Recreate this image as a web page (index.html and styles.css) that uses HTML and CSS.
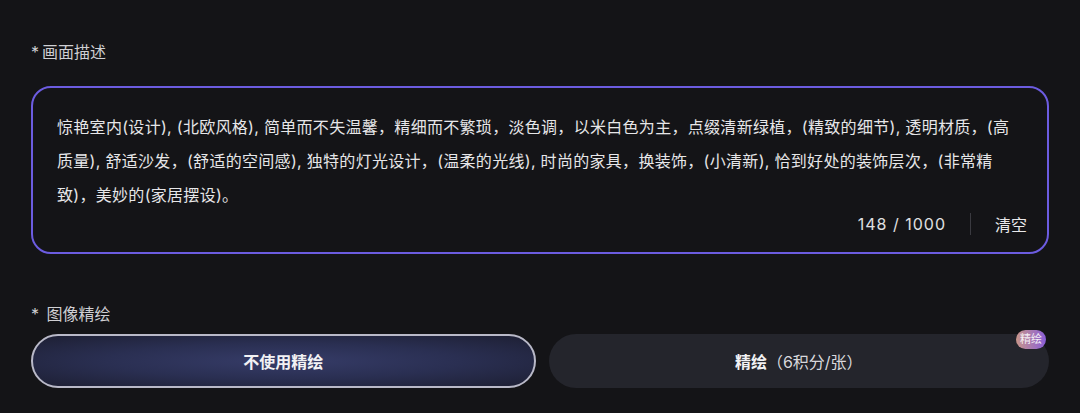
FILE: index.html
```html
<!DOCTYPE html>
<html lang="zh-CN">
<head>
    <meta charset="UTF-8">
    <meta name="viewport" content="width=device-width, initial-scale=1.0">
    <title>画面描述</title>
    <link rel="stylesheet" href="styles.css">
</head>
<body>
    <div class="panel">
        <!-- Prompt field -->
        <div class="field-label"><span class="star">*</span>画面描述</div>
        <div class="prompt-box">
            <div class="prompt-text">惊艳室内(设计), (北欧风格), 简单而不失温馨，精细而不繁琐，淡色调，以米白色为主，点缀清新绿植，(精致的细节), 透明材质，(高质量), 舒适沙发，(舒适的空间感), 独特的灯光设计，(温柔的光线), 时尚的家具，换装饰，(小清新), 恰到好处的装饰层次，(非常精致)，美妙的(家居摆设)。</div>
            <div class="prompt-footer">
                <span class="counter">148 / 1000</span>
                <span class="divider"></span>
                <span class="clear">清空</span>
            </div>
        </div>

        <!-- Refine option -->
        <div class="field-label second"><span class="star">*</span> 图像精绘</div>
        <div class="options">
            <div class="option active">不使用精绘</div>
            <div class="option">精绘<span class="cost">（6积分/张）</span>
                <span class="badge">精绘</span>
            </div>
        </div>
    </div>
</body>
</html>
```

FILE: styles.css
```css
/* Page base */
body {
    margin: 0;
    background: #141417;
    font-family: Inter, "Noto Sans CJK SC", sans-serif;
    color: #e4e4e6;
}
/* Outer padding of the form */
.panel {
    padding: 40px 31px 0 31px;
}
/* Field titles */
.field-label {
    font-size: 16px;
    line-height: 24px;
    color: #cfcfd3;
    margin-bottom: 22px;
}
.field-label .star {
    margin-right: 3px;
}
.field-label.second {
    margin-top: 48px;
    margin-bottom: 8px;
}
/* Prompt text area */
.prompt-box {
    border: 2px solid #6c5ce0;
    border-radius: 20px;
    padding: 22px 20px 20px 24px;
    height: 168px;
    box-sizing: border-box;
    display: flex;
    flex-direction: column;
}
.prompt-text {
    font-size: 16px;
    letter-spacing: 0.3px;
    line-height: 34px;
    color: #e6e6e8;
    margin-right: 10px; /* keeps the wrap points of the original */
}
.prompt-footer {
    display: flex;
    justify-content: flex-end;
    align-items: center;
    gap: 24px;
    font-size: 16px;
    margin-top: auto;
}
.counter {
    color: #e0e0e2;
    letter-spacing: 1px;
}
.divider {
    width: 1px;
    height: 22px;
    background: #3a3a40;
}
.clear {
    color: #e8e8ea;
}
/* Two choice buttons */
.options {
    display: flex;
    gap: 13px;
}
.option {
    flex: 1;
    height: 54px;
    border-radius: 27px;
    background: #24252c;
    display: flex;
    align-items: center;
    justify-content: center;
    font-size: 16px;
    font-weight: bold;
    color: #f2f2f4;
    position: relative;
    box-sizing: border-box;
}
.option.active {
    border: 2px solid #b9b9c8;
    background: radial-gradient(ellipse at center, #363c68 0%, #2a2f52 50%, #1d1f33 100%);
}
.cost {
    font-weight: normal;
    color: #d8d8dc;
}
/* Small tag on the top right corner */
.badge {
    position: absolute;
    top: -4px;
    right: 3px;
    font-size: 11px;
    font-weight: normal;
    line-height: 19px;
    padding: 0 4px;
    border-radius: 10px;
    color: #f4eef4;
    background: linear-gradient(90deg, #c8968a, #8a5ed8);
}
```
